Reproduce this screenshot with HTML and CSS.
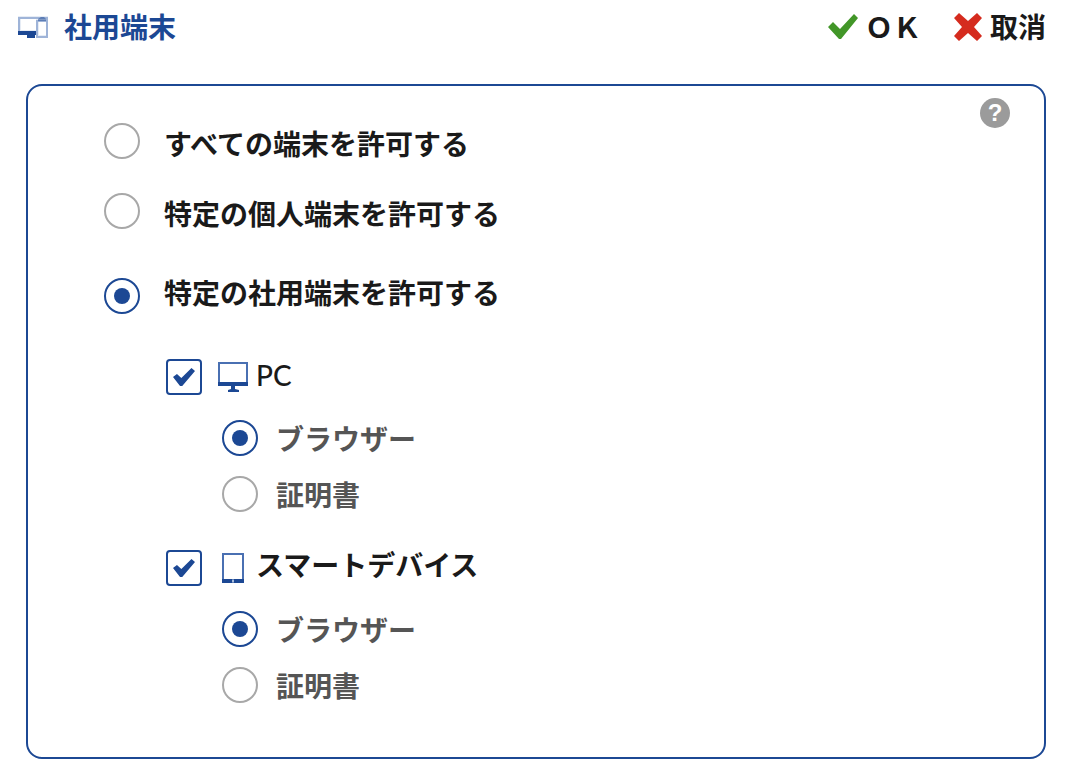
FILE: index.html
```html
<!DOCTYPE html>
<html lang="ja">
<head>
<meta charset="utf-8">
<meta name="viewport" content="width=device-width, initial-scale=1">
<title>社用端末</title>
<link rel="stylesheet" href="styles.css">
</head>
<body>
<form class="dialog">
  <header class="header">
    <svg class="icon" viewBox="0 0 30 30" aria-hidden="true">
      <path class="tint" d="M0 5h30v22H18v-3H0z"/>
      <path class="paper" d="M3 8h15v11H3zM21 11h7v13h-7z"/>
      <path class="line" d="M0 7h29v19H18M1 6v15M19 25V10h9"/>
      <path class="ink" d="M0 20h18v4h-1v3H9v-3H0z"/>
      <path class="ink" d="M20 8l3-2h3l2 2v2h-8z" opacity=".5"/>
    </svg>
    <h1 class="title">社用端末</h1>
    <div class="actions">
      <button class="action" type="submit">
        <svg class="icon" viewBox="0 0 30 30" aria-hidden="true"><path class="ok" d="M0 16l5-5 7 7L26 3l4 4-17 21h-2z"/></svg>
        <span>ＯＫ</span>
      </button>
      <button class="action" type="button">
        <svg class="icon" viewBox="0 0 30 30" aria-hidden="true"><path class="cancel" d="M6 2l9 8 9-8 5 5-8 9 8 9-5 5-9-8-9 8-5-5 8-9-8-9z"/></svg>
        <span>取消</span>
      </button>
    </div>
  </header>

  <main class="panel">
    <button class="help" type="button" aria-label="ヘルプ">?</button>
    <div class="options">
      <label class="row"><input class="radio" type="radio" name="scope"><span>すべての端末を許可する</span></label>
      <label class="row"><input class="radio" type="radio" name="scope"><span>特定の個人端末を許可する</span></label>
      <label class="row row-end"><input class="radio" type="radio" name="scope" checked><span>特定の社用端末を許可する</span></label>

      <section class="device">
        <label class="device-row">
          <input class="check" type="checkbox" checked>
          <svg class="icon" viewBox="0 0 30 30" aria-hidden="true">
            <path class="frame" d="M1 1h28v20H1z"/>
            <path class="ink" d="M0 20h30v4H17v3l4 1v2H10v-2l3-1v-3H0z"/>
          </svg>
          <span class="latin">PC</span>
        </label>
        <div class="methods">
          <label class="row"><input class="radio" type="radio" name="pc" checked><span>ブラウザー</span></label>
          <label class="row"><input class="radio" type="radio" name="pc"><span>証明書</span></label>
        </div>
      </section>

      <section class="device">
        <label class="device-row">
          <input class="check" type="checkbox" checked>
          <svg class="icon" viewBox="0 0 30 30" aria-hidden="true">
            <path class="frame" d="M5 1h20v27H5z"/>
            <path class="ink" d="M4 26h22v4H4z"/>
            <path class="line-light" d="M14 28h2"/>
          </svg>
          <span>スマートデバイス</span>
        </label>
        <div class="methods">
          <label class="row"><input class="radio" type="radio" name="mobile" checked><span>ブラウザー</span></label>
          <label class="row"><input class="radio" type="radio" name="mobile"><span>証明書</span></label>
        </div>
      </section>
    </div>
  </main>
</form>
</body>
</html>
```

FILE: styles.css
```css
* {
  box-sizing: border-box;
}

body {
  margin: 0;
  background: #fff;
  color: #1a1a1a;
  font: bold 28px/40px "Noto Sans CJK JP", sans-serif;
}

.dialog {
  padding: 6px 20px 15px 18px;
}

.header {
  display: flex;
  align-items: center;
  gap: 16px;
  height: 40px;
}

.title {
  margin: 0;
  color: #1c4894;
  font-size: 28px;
  line-height: 40px;
}

.actions {
  display: flex;
  gap: 32px;
  margin-left: auto;
}

.action {
  display: flex;
  align-items: center;
  gap: 7px;
  padding: 0;
  border: 0;
  background: none;
  color: inherit;
  font: inherit;
  cursor: pointer;
}

.icon {
  flex: none;
  width: 30px;
  height: 30px;
  overflow: visible;
}

.ink { fill: #1c4894; }
.paper { fill: #fff; }
.tint { fill: #e6ecf5; }
.line { fill: none; stroke: #9fb4d8; stroke-width: 2; }
.line-light { stroke: #a9bddd; stroke-width: 3; }
.frame { fill: #fff; stroke: #4a70b2; stroke-width: 2; }
.ok { fill: #429628; }
.cancel { fill: #d52b1e; }

.panel {
  position: relative;
  margin: 38px 0 0 8px;
  padding: 37px 76px 54px;
  border: 2px solid #1c4894;
  border-radius: 16px;
}

.help {
  position: absolute;
  top: 12px;
  right: 34px;
  width: 30px;
  height: 30px;
  padding: 0;
  border: 0;
  border-radius: 50%;
  background: #9b9b9b;
  color: #fff;
  font: bold 24px/30px "Liberation Sans", Arial, sans-serif;
}

.options {
  display: flex;
  flex-direction: column;
  gap: 30px;
}

.row {
  display: flex;
  align-items: flex-start;
  gap: 24px;
}

.row-end {
  align-items: flex-end;
  margin-top: 7px;
  line-height: 44px;
}

.radio,
.check {
  flex: none;
  appearance: none;
  display: grid;
  place-items: center;
  width: 36px;
  height: 36px;
  margin: 0;
  background: #fff;
}

.radio {
  border: 2px solid #a8a8a8;
  border-radius: 50%;
}

.radio:checked {
  border-color: #1c4894;
}

.radio:checked::before {
  content: "";
  width: 16px;
  height: 16px;
  border-radius: 50%;
  background: #1c4894;
}

.check {
  border: 2px solid #1c4894;
  border-radius: 4px;
}

.check:checked::before {
  content: "";
  width: 22px;
  height: 18px;
  background: #1c4894;
  clip-path: polygon(0 50%, 18% 33%, 38% 55%, 84% 0, 100% 17%, 42% 100%, 32% 100%);
}

.device {
  padding: 15px 0 0 62px;
}

.device + .device {
  padding: 8px 0 0 62px;
}

.device-row {
  display: flex;
  align-items: flex-end;
  gap: 8px;
  height: 36px;
  line-height: 44px;
}

.device-row .check {
  margin-right: 8px;
}

.device-row .icon {
  align-self: center;
}

.latin {
  font-family: Lato, sans-serif;
  font-weight: 500;
  line-height: 40px;
}

.methods {
  display: flex;
  flex-direction: column;
  gap: 20px;
  padding: 25px 0 0 56px;
  color: #555;
}

.methods .row {
  gap: 18px;
  line-height: 36px;
}
```
